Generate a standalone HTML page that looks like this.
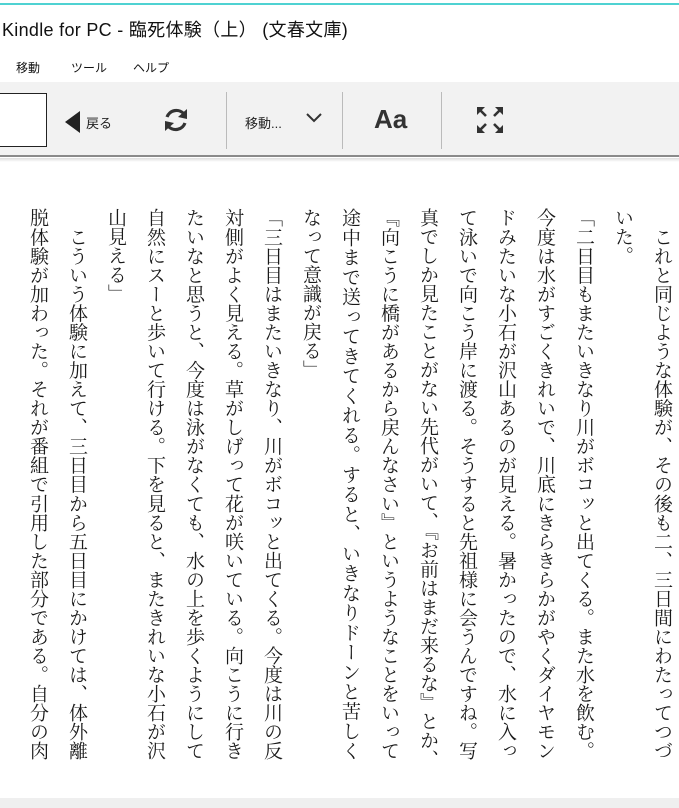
<!DOCTYPE html>
<html><head><meta charset="utf-8"><style>
*{margin:0;padding:0;box-sizing:border-box}
body{width:679px;height:808px;overflow:hidden;background:#fff;position:relative;font-family:"Liberation Sans","Noto Sans CJK JP",sans-serif;color:#222}
.abs{position:absolute}
.col{position:absolute;top:208px;height:552px;width:39px;writing-mode:vertical-rl;font-family:"Liberation Serif","Noto Serif CJK SC",serif;font-size:19px;line-height:39px;white-space:nowrap;color:#1a1a1a;text-align:justify;text-align-last:justify}
.col.s{text-align-last:start}
</style></head><body>
<div class="abs" style="left:0;top:3px;width:679px;height:2px;background:#4fd2d2"></div>
<div class="abs" style="left:2px;top:16px;font-size:18px;color:#111;letter-spacing:0.3px">Kindle for PC - 臨死体験（上） (文春文庫)</div>
<div class="abs" style="left:16px;top:59px;font-size:12px;color:#111">移動</div>
<div class="abs" style="left:71px;top:59px;font-size:12px;color:#111">ツール</div>
<div class="abs" style="left:133px;top:59px;font-size:12px;color:#111">ヘルプ</div>
<div class="abs" style="left:0;top:82px;width:679px;height:75px;background:#f2f2f2;border-bottom:2px solid #8a8a8a"></div>
<div class="abs" style="left:0;top:158px;width:679px;height:4px;background:linear-gradient(#ddd,#fff)"></div>
<div class="abs" style="left:-2px;top:93px;width:49px;height:54px;background:#fff;border:1.5px solid #222"></div>
<svg class="abs" style="left:64px;top:110px" width="18" height="24"><polygon points="16,1 16,23 1,12" fill="#222"/></svg>
<div class="abs" style="left:86px;top:113px;font-size:13px;color:#222">戻る</div>
<svg class="abs" style="left:162px;top:106px" width="28" height="28" viewBox="0 0 28 28" fill="none" stroke="#333" stroke-width="3.2"><path d="M5 11 A10 10 0 0 1 22 8"/><path d="M23 17 A10 10 0 0 1 6 20"/><polygon points="25,3 25,13 16,11" fill="#333" stroke="none"/><polygon points="3,25 3,15 12,17" fill="#333" stroke="none"/></svg>
<div class="abs" style="left:226px;top:92px;width:1px;height:57px;background:#bbb"></div>
<div class="abs" style="left:245px;top:113px;font-size:13px;color:#222">移動...</div>
<svg class="abs" style="left:305px;top:112px" width="18" height="12"><path d="M2 2 L9 9 L16 2" fill="none" stroke="#333" stroke-width="2"/></svg>
<div class="abs" style="left:342px;top:92px;width:1px;height:57px;background:#bbb"></div>
<div class="abs" style="left:374px;top:104px;font-size:26px;font-weight:bold;color:#333">Aa</div>
<div class="abs" style="left:441px;top:92px;width:1px;height:57px;background:#bbb"></div>
<svg class="abs" style="left:476px;top:106px" width="28" height="28" viewBox="0 0 28 28" stroke="#333" stroke-width="2.6" fill="#333"><path d="M3 3 L10 10 M25 3 L18 10 M3 25 L10 18 M25 25 L18 18"/><polygon points="1,1 9,1 1,9" stroke="none"/><polygon points="27,1 19,1 27,9" stroke="none"/><polygon points="1,27 9,27 1,19" stroke="none"/><polygon points="27,27 19,27 27,19" stroke="none"/></svg>

<div class="col" style="left:642px">　これと同じような体験が、その後も二、三日間にわたってつづ</div>
<div class="col s" style="left:603px">いた。</div>
<div class="col" style="left:564px">「二日目もまたいきなり川がボコッと出てくる。また水を飲む。</div>
<div class="col" style="left:525px">今度は水がすごくきれいで、川底にきらきらかがやくダイヤモン</div>
<div class="col" style="left:486px">ドみたいな小石が沢山あるのが見える。暑かったので、水に入っ</div>
<div class="col" style="left:447px">て泳いで向こう岸に渡る。そうすると先祖様に会うんですね。写</div>
<div class="col" style="left:408px">真でしか見たことがない先代がいて、『お前はまだ来るな』とか、</div>
<div class="col" style="left:369px">『向こうに橋があるから戻んなさい』というようなことをいって</div>
<div class="col" style="left:330px">途中まで送ってきてくれる。すると、いきなりドーンと苦しく</div>
<div class="col s" style="left:291px">なって意識が戻る」</div>
<div class="col" style="left:252px">「三日目はまたいきなり、川がボコッと出てくる。今度は川の反</div>
<div class="col" style="left:213px">対側がよく見える。草がしげって花が咲いている。向こうに行き</div>
<div class="col" style="left:174px">たいなと思うと、今度は泳がなくても、水の上を歩くようにして</div>
<div class="col" style="left:135px">自然にスーと歩いて行ける。下を見ると、またきれいな小石が沢</div>
<div class="col s" style="left:96px">山見える」</div>
<div class="col" style="left:57px">　こういう体験に加えて、三日目から五日目にかけては、体外離</div>
<div class="col" style="left:18px">脱体験が加わった。それが番組で引用した部分である。自分の肉</div>

<div class="abs" style="left:0;top:798px;width:679px;height:10px;background:#efefef"></div>
</body></html>
